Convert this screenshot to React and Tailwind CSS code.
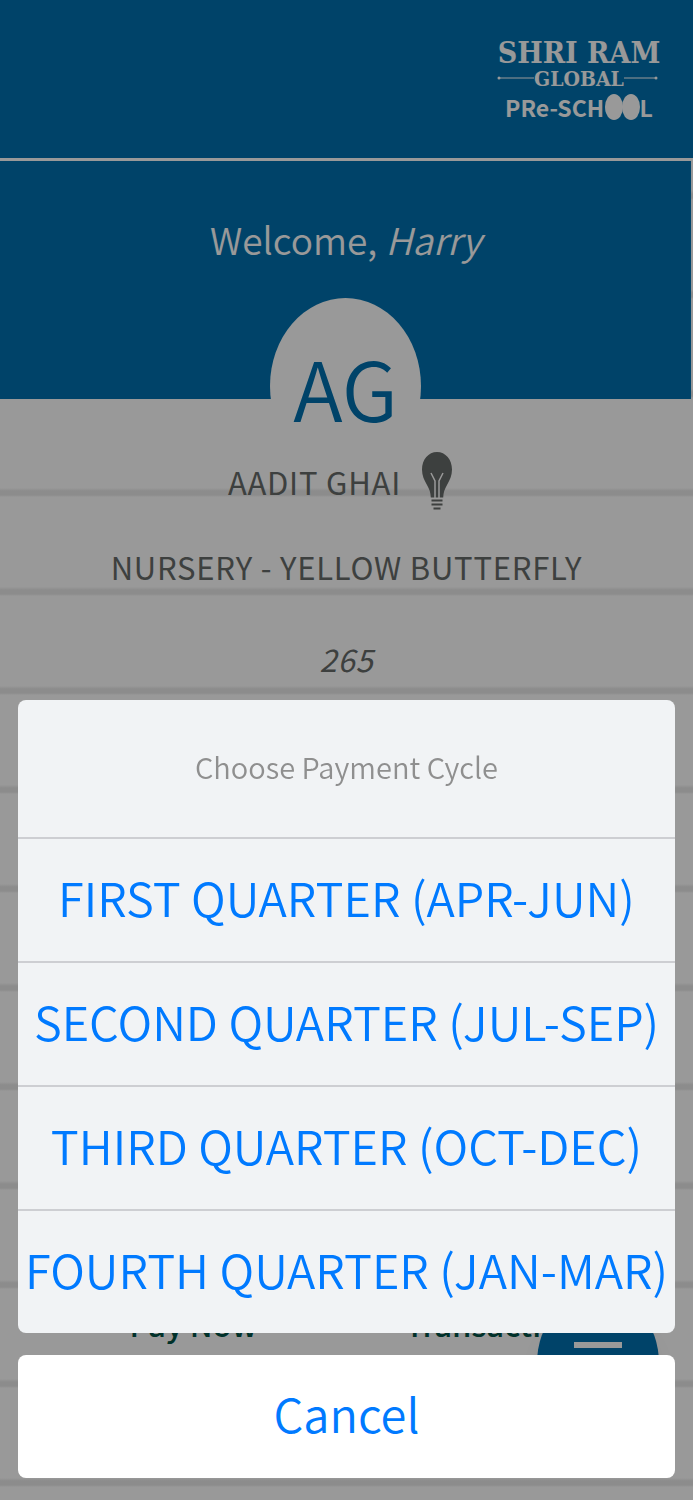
import React, { useState } from 'react';

const cycles = [
  'FIRST QUARTER (APR-JUN)',
  'SECOND QUARTER (JUL-SEP)',
  'THIRD QUARTER (OCT-DEC)',
  'FOURTH QUARTER (JAN-MAR)'
];

const Logo = () => (
  <svg viewBox="0 0 168 90" className="w-[168px] h-[90px] text-white" fill="currentColor" role="img" aria-label="Shri Ram Global Pre-School">
    <text x="82" y="29" textAnchor="middle" fontFamily="'DejaVu Serif Condensed', 'DejaVu Serif', serif" fontWeight="700" fontSize="30">SHRI RAM</text>
    <path d="M2 44h35M127 44h32" stroke="currentColor" strokeWidth="1" />
    <circle cx="2" cy="44" r="1.5" />
    <circle cx="159" cy="44" r="1.5" />
    <text x="82" y="52" textAnchor="middle" fontFamily="'DejaVu Serif Condensed', 'DejaVu Serif', serif" fontWeight="700" fontSize="21">GLOBAL</text>
    <text x="82" y="83" textAnchor="middle" fontFamily="'Noto Sans CJK SC', sans-serif" fontWeight="700" fontSize="23">PRe-SCHOOL</text>
    <ellipse cx="117" cy="73" rx="9" ry="13" />
    <ellipse cx="134" cy="73" rx="9" ry="13" />
  </svg>
);

const Bulb = () => (
  <svg viewBox="0 0 32 60" className="w-8 h-[60px] text-[#676b69]" aria-hidden="true">
    <path
      fill="currentColor"
      d="M16 0C7.500 0 1 7.500 1 17.500c0 6 2.200 10.500 5 15.500 2.600 4.600 3.500 7.500 3.800 12.500h12.400c.3-5 1.200-7.900 3.800-12.500 2.800-5 5-9.500 5-15.500C31 7.500 24.500 0 16 0z"
    />
    <path d="M10 21l4 8V46M22 21l-4 8V46" fill="none" stroke="#ffffff" strokeWidth="1.500" />
    <path d="M10.500 48.500h11M10.500 52.500h11M12.500 56.500h7" stroke="currentColor" strokeWidth="2" />
  </svg>
);

const Dashboard = () => (
  <div className="min-h-screen flex flex-col bg-white bg-[repeating-linear-gradient(to_bottom,#e9e9e9_0px,#ffffff_2px,#ffffff_92px,#e9e9e9_95px,#e9e9e9_99px)]">
    <header className="flex justify-end items-center h-[161px] px-7 bg-[#0071af] border-b-3 border-white">
      <Logo />
    </header>

    <section className="flex flex-col items-center h-[238px] mr-0.5 pt-12 bg-[#0071af]">
      <h1 className="text-[37px] leading-[60px] font-[350] text-white">
        Welcome, <em>Harry</em>
      </h1>
      <div className="shrink-0 mt-[29px] w-[151px] h-44 rounded-[50%] bg-white text-[#0071af] text-[82px] font-[350] flex items-center justify-center">
        AG
      </div>
    </section>

    <section className="flex flex-col items-center pt-12 text-[31px] tracking-wide text-[#676b69]">
      <div className="flex items-center gap-5 h-[70px] pr-3">
        <h2>AADIT GHAI</h2>
        <Bulb />
      </div>
      <p className="mt-[26px] leading-12">NURSERY - YELLOW BUTTERFLY</p>
      <p className="mt-11 leading-12 italic">265</p>
    </section>

    <nav className="mt-auto mb-[152px] px-10 grid grid-cols-2 text-center text-[31px] leading-12 font-medium text-[#005246]">
      <a href="#pay">Pay Now</a>
      <a href="#transactions">Transactions</a>
    </nav>

    <button
      type="button"
      aria-label="Menu"
      className="fixed right-[34px] bottom-[66px] w-[122px] h-[142px] rounded-[50%] bg-[#0071af] shadow-xl flex flex-col items-center justify-center gap-3"
    >
      <span className="w-12 h-1.5 bg-white" />
      <span className="w-12 h-1.5 bg-white" />
      <span className="w-12 h-1.5 bg-white" />
    </button>
  </div>
);

const PaymentSheet = ({ onClose, onSelect }) => (
  <div className="fixed inset-0 flex flex-col justify-end gap-[22px] bg-black/40 px-[18px] pb-[22px]">
    <div role="dialog" aria-labelledby="cycle-title" className="rounded-lg overflow-hidden bg-[#f1f3f5] divide-y-2 divide-[#cdced2]">
      <h2 id="cycle-title" className="pt-[46px] pb-[50px] text-center text-[29px] leading-[41px] font-[350] text-[#8f8f8f]">
        Choose Payment Cycle
      </h2>
      {cycles.map((cycle) => (
        <button
          key={cycle}
          type="button"
          onClick={() => onSelect(cycle)}
          className="block box-content w-full h-[116px] pb-1.5 text-[47px] font-[350] text-[#007aff] whitespace-nowrap"
        >
          {cycle}
        </button>
      ))}
    </div>
    <button type="button" onClick={onClose} className="h-[123px] pb-1.5 rounded-lg bg-white text-[47px] font-[350] text-[#007aff]">
      Cancel
    </button>
  </div>
);

const App = () => {
  const [open, setOpen] = useState(true);
  const [, setCycle] = useState('');

  const handleSelect = (value) => {
    setCycle(value);
    setOpen(false);
  };

  return (
    <div className="font-['Noto_Sans_CJK_SC',sans-serif]">
      <Dashboard />
      {open && <PaymentSheet onClose={() => setOpen(false)} onSelect={handleSelect} />}
    </div>
  );
};

export default App;
